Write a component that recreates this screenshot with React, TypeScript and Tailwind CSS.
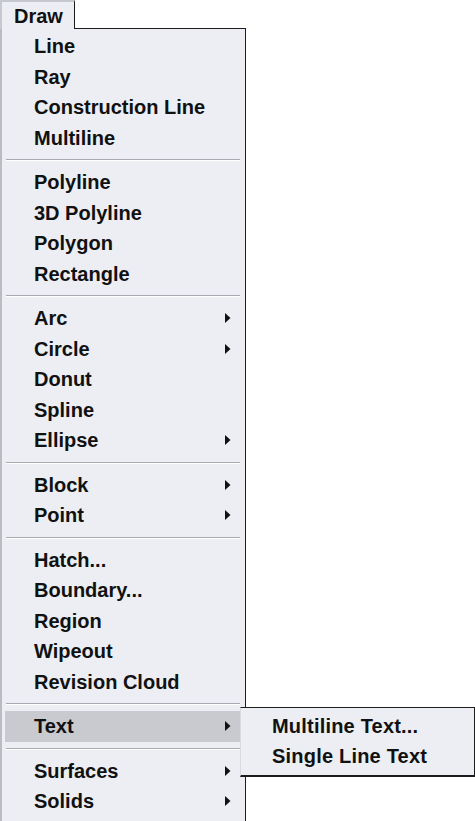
import React from "react";

type Item = { label: string; sub?: boolean; active?: boolean };

const groups: Item[][] = [
  [{ label: "Line" }, { label: "Ray" }, { label: "Construction Line" }, { label: "Multiline" }],
  [{ label: "Polyline" }, { label: "3D Polyline" }, { label: "Polygon" }, { label: "Rectangle" }],
  [
    { label: "Arc", sub: true },
    { label: "Circle", sub: true },
    { label: "Donut" },
    { label: "Spline" },
    { label: "Ellipse", sub: true },
  ],
  [
    { label: "Block", sub: true },
    { label: "Point", sub: true },
  ],
  [
    { label: "Hatch..." },
    { label: "Boundary..." },
    { label: "Region" },
    { label: "Wipeout" },
    { label: "Revision Cloud" },
  ],
  [{ label: "Text", sub: true, active: true }],
  [
    { label: "Surfaces", sub: true },
    { label: "Solids", sub: true },
  ],
];

function Arrow() {
  return (
    <svg width="6" height="10" viewBox="0 0 6 10" className="shrink-0">
      <polygon points="0,0 5.5,5 0,10" fill="#111" />
    </svg>
  );
}

function Row({ item }: { item: Item }) {
  return (
    <div
      className={`relative flex h-[30.5px] items-center justify-between pl-[29px] pr-[9px] mr-[5px] ml-[3px] ${
        item.active ? "bg-[#c9cacf]" : ""
      }`}
    >
      <span>{item.label}</span>
      {item.sub && <Arrow />}
      {item.active && (
        <div className="absolute left-[235px] top-[-4px] z-20 w-[236px] h-[70px] bg-[#eceef3] border-t border-r-2 border-b-2 border-[#1c1c1c] border-l border-l-[#d8dbe0] pt-[3px] pl-[31px]">
          <div className="flex h-[30px] items-center tracking-[0.2px]">Multiline Text...</div>
          <div className="flex h-[30px] items-center tracking-[0.2px]">Single Line Text</div>
        </div>
      )}
    </div>
  );
}

function Separator() {
  return (
    <div className="flex h-[14px] flex-col justify-center ml-[4px] mr-[5px]">
      <div className="h-px bg-[#a7abb3]" />
      <div className="h-px bg-white" />
    </div>
  );
}

export default function App() {
  return (
    <div className="min-h-[821px] w-[475px] overflow-hidden bg-white text-[20px] font-bold text-[#111] [font-family:'Liberation_Sans',Arial,sans-serif] leading-none">
      <div className="relative z-10 flex h-[29px] w-[75px] items-center border-l-2 border-t-2 border-r border-l-[#c5c8ce] border-t-[#c5c8ce] border-r-[#1c1c1c] bg-[#eceef3] pl-[12px]">
        Draw
      </div>
      <div className="-mt-px w-[246px] border-t border-r border-[#1c1c1c] border-l-2 border-l-[#b9bcc3] bg-[#eceef3] pt-[2px]">
        {groups.map((g, gi) => (
          <div key={gi}>
            {gi > 0 && <Separator />}
            {g.map((it) => (
              <Row key={it.label} item={it} />
            ))}
          </div>
        ))}
        <div className="h-[6px]" />
      </div>
    </div>
  );
}
